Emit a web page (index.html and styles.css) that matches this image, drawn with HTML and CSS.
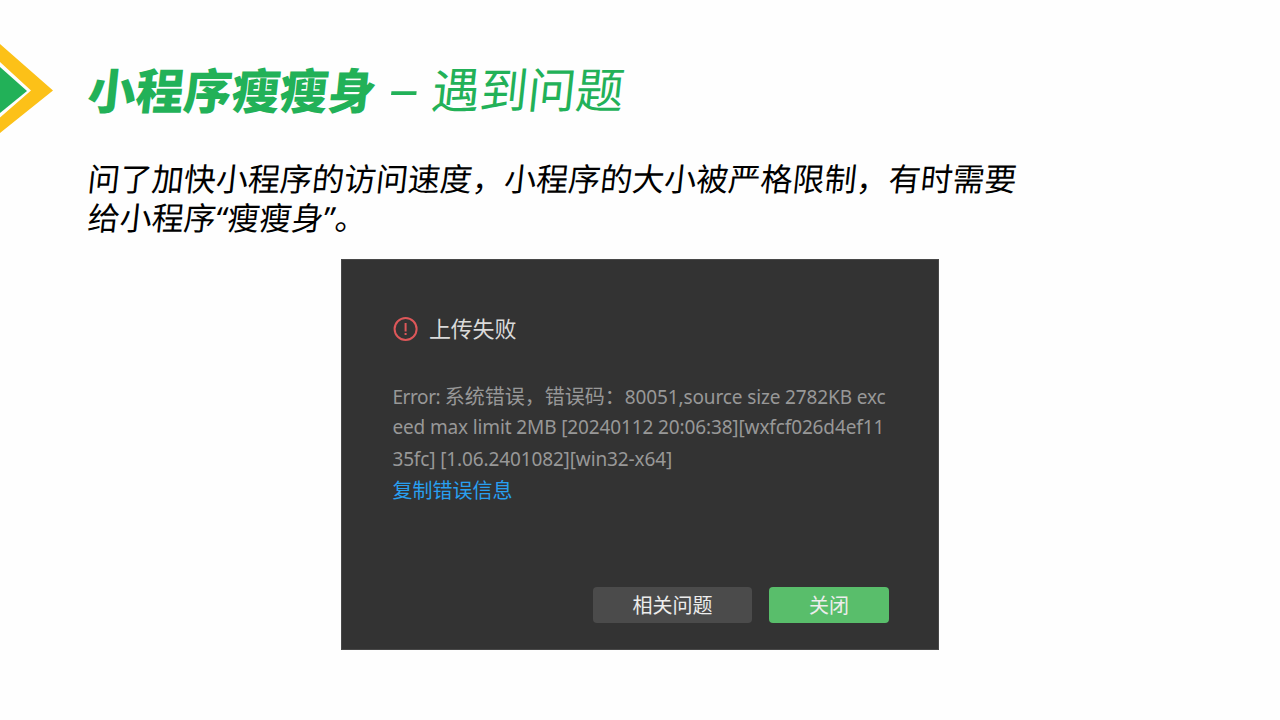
FILE: index.html
```html
<!DOCTYPE html>
<html lang="zh-CN">
<head>
    <meta charset="UTF-8">
    <meta name="viewport" content="width=device-width, initial-scale=1.0">
    <title>小程序瘦瘦身</title>
    <link rel="stylesheet" href="styles.css">
</head>
<body>
    <div class="slide">
        <header class="slide-header">
            <svg class="arrow" width="54" height="92" viewBox="0 0 54 92">
                <path d="M0 2L53 48.5L0 91V75.5L31 48.5L0 20Z" fill="#fcc118"/>
                <path d="M0 25L27 49L0 71Z" fill="#22b158"/>
            </svg>
            <h1 class="title"><span class="title-main">小程序瘦瘦身</span><span class="title-dash">–</span><span class="title-sub">遇到问题</span></h1>
        </header>

        <div class="intro">
            <div class="intro-line">问了加快小程序的访问速度，小程序的大小被严格限制，有时需要</div>
            <div class="intro-line">给小程序“瘦瘦身”。</div>
        </div>

        <!-- Upload error dialog -->
        <div class="dialog">
            <div class="dialog-title">
                <svg class="warn-icon" width="26" height="26" viewBox="0 0 26 26" fill="none" stroke="#dd5759" stroke-width="2">
                    <circle cx="13.6" cy="13" r="11"/>
                    <path d="M13.6 7V15.5M13.6 17V19"/>
                </svg>
                <span>上传失败</span>
            </div>
            <div class="message">
                <div><span class="latin label">Error: </span>系统错误，错误码：<span class="latin">80051,source size 2782KB exc</span></div>
                <div class="latin">eed max limit 2MB [20240112 20:06:38][wxfcf026d4ef11</div>
                <div class="latin">35fc] [1.06.2401082][win32-x64]</div>
                <a class="copy-link">复制错误信息</a>
            </div>
            <div class="buttons">
                <button class="btn">相关问题</button>
                <button class="btn btn-close">关闭</button>
            </div>
        </div>
    </div>
</body>
</html>
```

FILE: styles.css
```css
* {
    box-sizing: border-box;
}
body {
    margin: 0;
    background: #fefefe;
    font-family: "Noto Sans", "Noto Sans CJK SC", sans-serif;
}
.slide {
    width: 1280px;
    height: 720px;
    overflow: hidden;
}
.slide-header {
    display: flex;
    height: 160px;
    padding-top: 42px;
}
.arrow {
    flex: none;
    margin-right: 33px;
}
.title {
    display: flex;
    margin: 0;
    color: #22b158;
    font-size: 48px;
    line-height: 96px;
    font-weight: 400;
    white-space: nowrap;
    transform: skewX(-6deg);
}
.title-main {
    font-weight: 900;
    font-family: "Noto Sans CJK SC", sans-serif;
    line-height: 92px;
}
.title-dash {
    width: 56px;
    text-align: center;
    font-weight: 400;
    line-height: 91px;
    transform: scaleX(1.25);
}
.intro {
    padding-left: 88px;
    height: 99px;
    color: #000;
    font-size: 32px;
    line-height: 38.5px;
}
.intro-line {
    height: 38.5px;
    white-space: nowrap;
    letter-spacing: 0.03px;
    transform: skewX(-6deg);
}
.dialog {
    display: flex;
    flex-direction: column;
    width: 598px;
    height: 391px;
    margin-left: 341px;
    padding: 53px 49px 26px 50px;
    background: #333;
    border: 1px solid #484848;
}
.dialog-title {
    display: flex;
    align-items: center;
    gap: 11px;
    height: 32px;
    color: #dadada;
    font-size: 22px;
}
.dialog-title span {
    margin-top: -4px;
    letter-spacing: -0.2px;
}
.message {
    margin-top: 35.5px;
    padding-left: 0.4px;
    color: #989898;
    font-size: 20px;
    line-height: 31.6px;
    white-space: nowrap;
}
.message div {
    height: 31.6px;
}
.latin {
    font-size: 19px;
    letter-spacing: -0.13px;
}
.label {
    letter-spacing: -0.4px;
}
.copy-link {
    color: #289ff0;
}
.buttons {
    display: flex;
    justify-content: flex-end;
    gap: 17px;
    margin-top: auto;
}
.btn {
    width: 159px;
    height: 36px;
    padding: 0;
    border: none;
    border-radius: 4px;
    background: #4b4b4b;
    color: #ededed;
    font-family: inherit;
    font-size: 20px;
    line-height: 37px;
}
.btn-close {
    width: 120px;
    background: #59be6b;
}
```
